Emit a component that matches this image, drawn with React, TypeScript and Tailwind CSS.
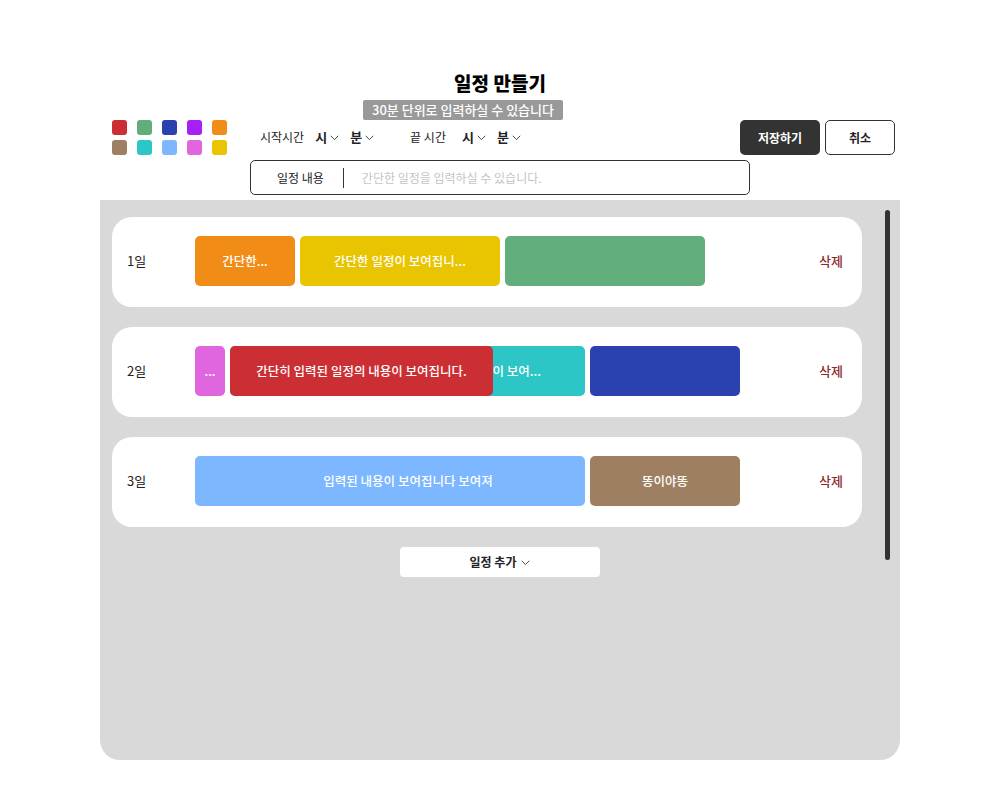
import React from "react";

const swatches = [
  "#cc2f33", "#62ad7c", "#2b41b0", "#a61ff5", "#f18d17",
  "#9e7f62", "#2cc6c6", "#7cb7ff", "#e066e0", "#e9c400",
];

function Chevron({ className = "ml-[3px]" }: { className?: string }) {
  return (
    <svg width="9" height="6" viewBox="0 0 9 6" className={`${className} mt-[2px]`}>
      <path d="M0.8 0.8 L4.5 4.6 L8.2 0.8" fill="none" stroke="#333" strokeWidth="0.9" />
    </svg>
  );
}

function Block({ w, color, text, className = "justify-center" }: { w: number; color: string; text?: string; className?: string }) {
  return (
    <div
      className={`h-[50px] shrink-0 rounded-[5px] flex items-center text-white text-[12.5px] font-medium whitespace-nowrap overflow-hidden ${className}`}
      style={{ width: w, backgroundColor: color }}
    >
      {text}
    </div>
  );
}

function Card({ label, children }: { label: string; children: React.ReactNode }) {
  return (
    <div className="h-[90px] w-[750px] bg-white rounded-[20px] flex items-center pl-[15px] pr-[19px]">
      <div className="w-[68px] text-[13px] text-[#222] -mt-[2px]">{label}</div>
      <div className="flex-1 flex items-center gap-[5px] relative -mt-[2px]">{children}</div>
      <div className="text-[13px] text-[#8c2a2a] font-medium -mt-[2px] ml-[1px]">삭제</div>
    </div>
  );
}

export default function App() {
  return (
    <div
      className="w-[1000px] h-[800px] bg-white flex flex-col items-center"
      style={{ fontFamily: '"Noto Sans CJK KR", "Noto Sans", sans-serif' }}
    >
      <div className="w-[800px] pt-[70px] flex flex-col">
        <div className="text-center text-[19px] font-black leading-[26px] text-black">일정 만들기</div>
        <div className="flex mt-[4px]">
          <div className="ml-[263px] w-[200px] h-[20px] bg-[#999999] rounded-[2px] text-white text-[13px] font-medium leading-[20px] text-center">
            30분 단위로 입력하실 수 있습니다
          </div>
        </div>
        <div className="h-[35px] flex items-center pl-[12px] pr-[5px]">
          <div className="grid grid-cols-5 gap-x-[10px] gap-y-[5px]">
            {swatches.map((c) => (
              <div key={c} className="w-[15px] h-[15px] rounded-[3px]" style={{ backgroundColor: c }} />
            ))}
          </div>
          <div className="flex items-center ml-[33px] text-[12px] text-[#222] -mt-[1px]">
            <span>시작시간</span>
            <span className="ml-[11px] font-bold text-[13px]">시</span>
            <Chevron />
            <span className="ml-[11px] font-bold text-[13px]">분</span>
            <Chevron />
            <span className="ml-[36px]">끝 시간</span>
            <span className="ml-[16px] font-bold text-[13px]">시</span>
            <Chevron />
            <span className="ml-[11px] font-bold text-[13px]">분</span>
            <Chevron />
          </div>
          <div className="ml-auto flex gap-[5px]">
            <button className="w-[80px] h-[35px] bg-[#333333] text-white rounded-[5px] text-[12px] font-bold">저장하기</button>
            <button className="w-[70px] h-[35px] bg-white text-[#222] border border-[#333] rounded-[5px] text-[12px] font-bold">취소</button>
          </div>
        </div>
        <div className="flex justify-center mt-[5px]">
          <div className="w-[500px] h-[35px] border border-[#333] rounded-[5px] flex items-center">
            <span className="ml-[26px] text-[12px] text-[#222]">일정 내용</span>
            <div className="ml-[19px] w-px h-[20px] bg-[#333]" />
            <span className="ml-[18px] text-[12px] text-[#c4c4c4]">간단한 일정을 입력하실 수 있습니다.</span>
          </div>
        </div>
      </div>
      <div className="relative w-[800px] h-[560px] mt-[5px] bg-[#d9d9d9] rounded-b-[20px] pl-[12px] pt-[17px] flex flex-col gap-[20px]">
        <Card label="1일">
          <Block w={100} color="#f18d17" text="간단한..." />
          <Block w={200} color="#e9c400" text="간단한 일정이 보여집니..." />
          <Block w={200} color="#62ad7c" />
        </Card>
        <Card label="2일">
          <Block w={30} color="#e066e0" text="..." />
          <Block w={355} color="#2cc6c6" text="이 보여..." className="justify-end pr-[44px]" />
          <Block w={150} color="#2b41b0" />
          <div className="absolute left-[35px] top-0">
            <Block w={263} color="#cc2f33" text="간단히 입력된 일정의 내용이 보여집니다." />
          </div>
        </Card>
        <Card label="3일">
          <Block w={390} color="#7cb7ff" text="입력된 내용이 보여집니다 보여져" className="justify-center pl-[36px]" />
          <Block w={150} color="#9e7f62" text="똥이야똥" />
        </Card>
        <div className="flex justify-center pr-[12px]">
          <button className="w-[200px] h-[30px] bg-white rounded-[4px] text-[12px] font-bold text-[#222] flex items-center justify-center">
            일정 추가
            <Chevron className="ml-[5px]" />
          </button>
        </div>
        <div className="absolute left-[785px] top-[10px] w-[5px] h-[350px] bg-[#333] rounded-full" />
      </div>
    </div>
  );
}
